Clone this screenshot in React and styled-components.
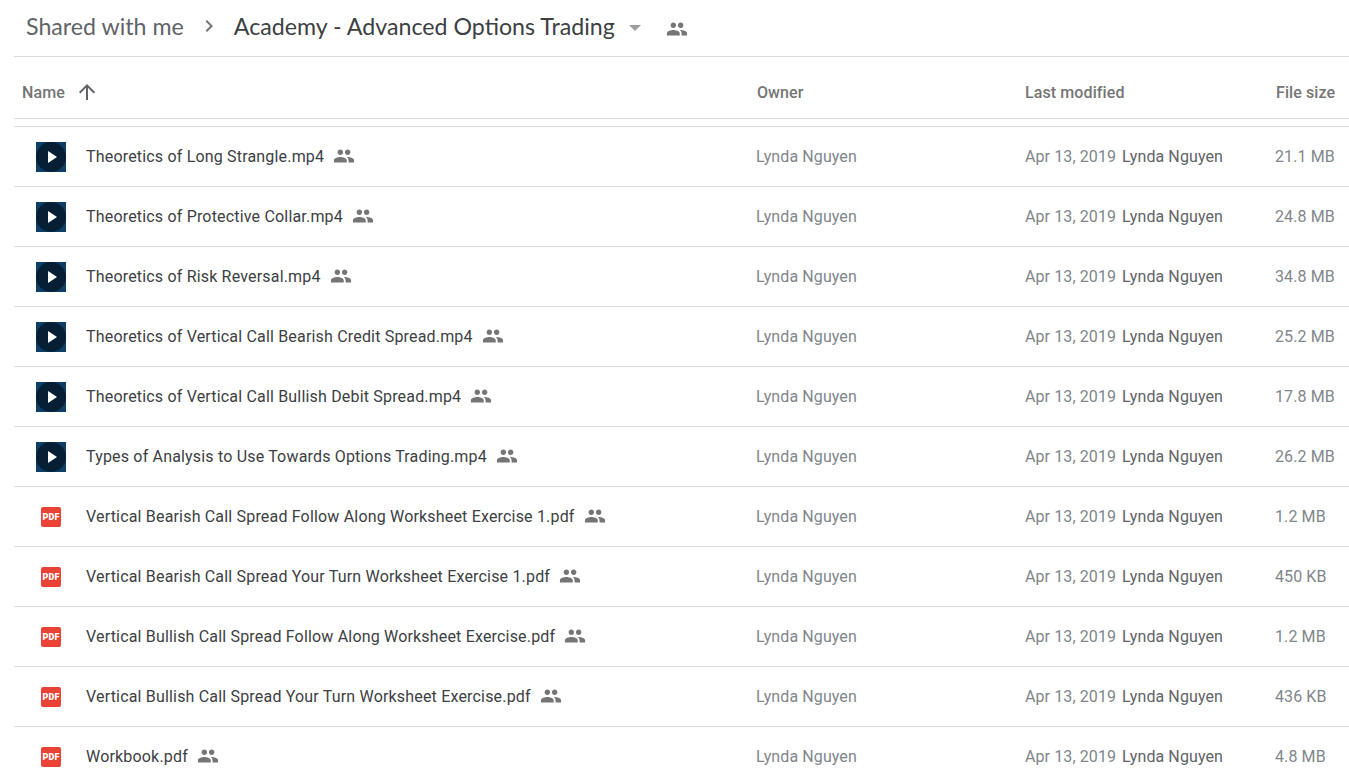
import React from 'react';
import styled, { createGlobalStyle } from 'styled-components';

const FILES = [
  { name: 'Theoretics of Long Strangle.mp4', size: '21.1 MB', type: 'video' },
  { name: 'Theoretics of Protective Collar.mp4', size: '24.8 MB', type: 'video' },
  { name: 'Theoretics of Risk Reversal.mp4', size: '34.8 MB', type: 'video' },
  { name: 'Theoretics of Vertical Call Bearish Credit Spread.mp4', size: '25.2 MB', type: 'video' },
  { name: 'Theoretics of Vertical Call Bullish Debit Spread.mp4', size: '17.8 MB', type: 'video' },
  { name: 'Types of Analysis to Use Towards Options Trading.mp4', size: '26.2 MB', type: 'video' },
  { name: 'Vertical Bearish Call Spread Follow Along Worksheet Exercise 1.pdf', size: '1.2 MB', type: 'pdf' },
  { name: 'Vertical Bearish Call Spread Your Turn Worksheet Exercise 1.pdf', size: '450 KB', type: 'pdf' },
  { name: 'Vertical Bullish Call Spread Follow Along Worksheet Exercise.pdf', size: '1.2 MB', type: 'pdf' },
  { name: 'Vertical Bullish Call Spread Your Turn Worksheet Exercise.pdf', size: '436 KB', type: 'pdf' },
  { name: 'Workbook.pdf', size: '4.8 MB', type: 'pdf' },
];

const GlobalStyle = createGlobalStyle`
  html, body {
    margin: 0;
    background: #fff;
    height: 774px;
    overflow: hidden;
    font-family: Roboto, "Liberation Sans", sans-serif;
  }
`;

const PeopleIcon = ({ size = 22, color = '#757575' }) => (
  <svg width={size} height={size} viewBox="0 0 24 24" fill={color}>
    <path d="M16 11c1.66 0 2.99-1.34 2.99-3S17.66 5 16 5s-3 1.34-3 3 1.34 3 3 3zm-8 0c1.66 0 2.99-1.34 2.99-3S9.66 5 8 5 5 6.34 5 8s1.34 3 3 3zm0 2c-2.33 0-7 1.17-7 3.5V19h14v-2.5C15 14.17 10.33 13 8 13zm8 0c-.29 0-.62.02-.97.05 1.16.84 1.97 1.97 1.97 3.45V19h6v-2.5c0-2.33-4.67-3.5-7-3.5z" />
  </svg>
);

const VideoIcon = () => (
  <svg width="30" height="30" viewBox="0 0 30 30">
    <rect width="30" height="30" fill="#0f3f66" />
    <circle cx="15" cy="15" r="15" fill="#071f35" />
    <path d="M12 9l9 6-9 6z" fill="#fff" />
  </svg>
);

const PdfIcon = () => (
  <PdfBadge>PDF</PdfBadge>
);

const App = () => (
  <Page>
    <GlobalStyle />
    <Breadcrumb>
      <Crumb>Shared with me</Crumb>
      <Chevron width="24" height="24" viewBox="0 0 24 24">
        <path d="M8.59 16.59 13.17 12 8.59 7.41 10 6l6 6-6 6z" fill="#757575" />
      </Chevron>
      <CurrentCrumb>Academy - Advanced Options Trading</CurrentCrumb>
      <Caret />
      <SharedMark>
        <PeopleIcon />
      </SharedMark>
    </Breadcrumb>
    <ListHeader>
      <NameHead>
        Name
        <svg width="24" height="24" viewBox="0 0 24 24">
          <path d="M20 12l-1.41-1.41L13 16.17V4h-2v12.17l-5.58-5.59L4 12l8 8 8-8z" transform="rotate(180 12 12)" fill="#5f6368" />
        </svg>
      </NameHead>
      <OwnerHead>Owner</OwnerHead>
      <ModifiedHead>Last modified</ModifiedHead>
      <SizeHead>File size</SizeHead>
    </ListHeader>
    <Spacer />
    {FILES.map((file) => (
      <Row key={file.name}>
        <IconCell>{file.type === 'video' ? <VideoIcon /> : <PdfIcon />}</IconCell>
        <NameCell>
          <FileName>{file.name}</FileName>
          <SharedMark $row>
            <PeopleIcon />
          </SharedMark>
        </NameCell>
        <OwnerCell>Lynda Nguyen</OwnerCell>
        <ModifiedCell>
          <span>Apr 13, 2019</span>
          <ModifiedBy>Lynda Nguyen</ModifiedBy>
        </ModifiedCell>
        <SizeCell>{file.size}</SizeCell>
      </Row>
    ))}
  </Page>
);

const Page = styled.div`
  width: 1349px;
  height: 774px;
  overflow: hidden;
  padding-left: 14px;
  box-sizing: border-box;
`;

const Breadcrumb = styled.div`
  display: flex;
  align-items: center;
  height: 56px;
  padding-left: 12px;
  border-bottom: 1px solid #dadce0;
`;

const Crumb = styled.span`
  font-family: Lato, Roboto, sans-serif;
  font-size: 23.2px;
  color: #5f6368;
  margin-bottom: 4px;
`;

const CurrentCrumb = styled(Crumb)`
  color: #3c4043;
`;

const Chevron = styled.svg`
  margin: 0 13px 4px 13px;
`;

const Caret = styled.span`
  width: 0;
  height: 0;
  margin: 0 25px 0 14px;
  border-left: 6px solid transparent;
  border-right: 6px solid transparent;
  border-top: 6px solid #9e9e9e;
`;

const SharedMark = styled.span`
  display: flex;
  margin-top: ${(props) => (props.$row ? '-1px' : '2px')};
`;

const ListHeader = styled.div`
  display: flex;
  align-items: center;
  height: 52px;
  padding-top: 9px;
  border-bottom: 1px solid #dadce0;
  font-size: 16px;
  font-weight: 500;
  color: #757575;
  letter-spacing: 0.1px;
`;

const NameHead = styled.div`
  display: flex;
  align-items: center;
  gap: 10px;
  width: 743px;
  padding-left: 8px;
  box-sizing: border-box;
`;

const OwnerHead = styled.div`
  width: 268px;
`;

const ModifiedHead = styled.div`
  width: 251px;
`;

const SizeHead = styled.div``;

const Spacer = styled.div`
  height: 7px;
  border-bottom: 1px solid #dadce0;
`;

const Row = styled.div`
  display: flex;
  align-items: center;
  height: 59px;
  border-bottom: 1px solid #dadce0;
  font-size: 16px;
  letter-spacing: 0.1px;
  line-height: 58px;
`;

const IconCell = styled.div`
  display: flex;
  justify-content: center;
  width: 72px;
  padding-left: 2px;
  box-sizing: border-box;
`;

const NameCell = styled.div`
  display: flex;
  align-items: center;
  gap: 9px;
  width: 670px;
  color: #3c4043;
  letter-spacing: 0.18px;
`;

const FileName = styled.span``;

const OwnerCell = styled.div`
  width: 269px;
  color: #80868b;
`;

const ModifiedCell = styled.div`
  display: flex;
  gap: 6px;
  width: 250px;
  color: #80868b;
`;

const ModifiedBy = styled.span`
  color: #5f6368;
`;

const SizeCell = styled.div`
  color: #80868b;
`;

const PdfBadge = styled.div`
  display: flex;
  align-items: center;
  justify-content: center;
  width: 20px;
  height: 20px;
  border-radius: 2px;
  background: #ea4335;
  color: #fff;
  font-size: 9px;
  font-weight: 900;
  letter-spacing: 0.2px;
  line-height: 20px;
`;

export default App;
